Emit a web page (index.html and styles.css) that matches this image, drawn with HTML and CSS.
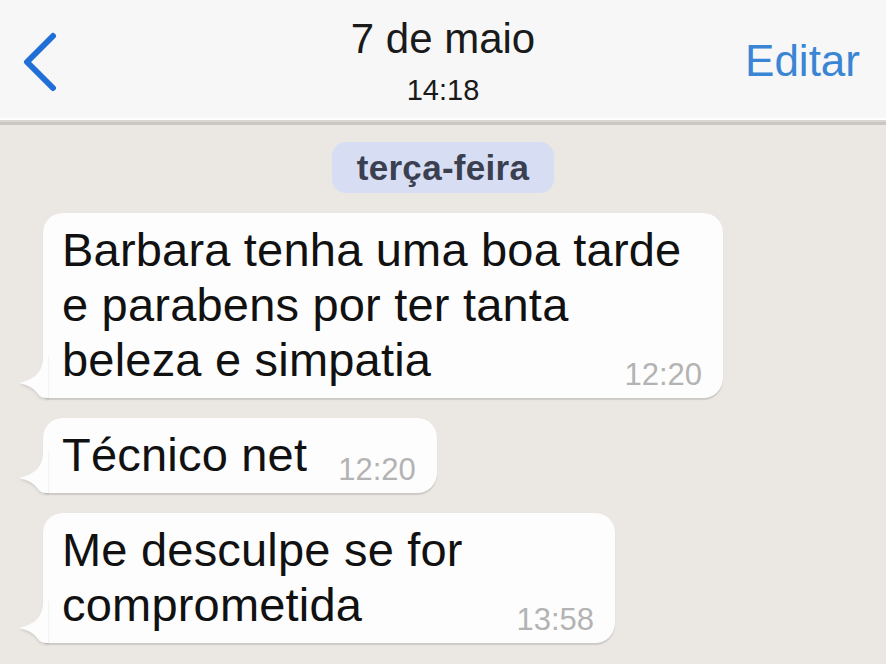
FILE: index.html
```html
<!DOCTYPE html>
<html lang="pt">
<head>
  <meta charset="UTF-8" />
  <meta name="viewport" content="width=device-width, initial-scale=1" />
  <title>7 de maio</title>
  <link rel="stylesheet" href="styles.css">
</head>
<body>
  <div class="topbar">
    <div class="back">
      <svg width="36" height="60" viewBox="0 0 36 60">
        <path d="M31 4 L5 30 L31 56" fill="none" stroke="#1f6fd6" stroke-width="6" stroke-linecap="round" stroke-linejoin="round"/>
      </svg>
    </div>
    <div class="title">
      <div class="title-date">7 de maio</div>
      <div class="title-time">14:18</div>
    </div>
    <div class="edit">Editar</div>
  </div>

  <div class="chat">
    <div class="day">terça-feira</div>

    <div class="bubble wide">
      <svg class="tail" width="30" height="44" viewBox="0 0 30 44">
        <path d="M25 0 C25 14 22 24 1 29 C10 31 16 34 20 40 C22 43 25 44 30 44 L30 0 Z" fill="#fdfdfd"/>
      </svg>
      <p class="text">Barbara tenha uma boa tarde<br>e parabens por ter tanta<br>beleza e simpatia<span class="time">12:20</span></p>
    </div>

    <div class="bubble">
      <svg class="tail" width="30" height="44" viewBox="0 0 30 44">
        <path d="M25 0 C25 14 22 24 1 29 C10 31 16 34 20 40 C22 43 25 44 30 44 L30 0 Z" fill="#fdfdfd"/>
      </svg>
      <p class="text">Técnico net<span class="time">12:20</span></p>
    </div>

    <div class="bubble mid">
      <svg class="tail" width="30" height="44" viewBox="0 0 30 44">
        <path d="M25 0 C25 14 22 24 1 29 C10 31 16 34 20 40 C22 43 25 44 30 44 L30 0 Z" fill="#fdfdfd"/>
      </svg>
      <p class="text">Me desculpe se for<br>comprometida<span class="time">13:58</span></p>
    </div>
  </div>
</body>
</html>
```

FILE: styles.css
```css
body {
  margin: 0;
  font-family: "Liberation Sans", Arial, sans-serif;
  background: #ebe8e4;
  color: #111;
  height: 664px;
  overflow: hidden;
}
.topbar {
  display: grid;
  grid-template-columns: 1fr auto 1fr;
  height: 118px;
  background: #f7f7f8;
  border-bottom: 2px solid #fff;
  box-shadow: 0 2px 0 #d8d6d3, 0 5px 0 #c9c7c4;
}
.back {
  padding: 32px 0 0 22px;
}
.back svg {
  display: block;
}
.title {
  text-align: center;
  padding-top: 15px;
  color: #1a1a1a;
}
.title-date {
  font-size: 42px;
  line-height: 48px;
}
.title-time {
  font-size: 29px;
  line-height: 34px;
  margin-top: 10px;
}
.edit {
  justify-self: end;
  padding: 36px 26px 0 0;
  font-size: 44px;
  line-height: 50px;
  color: #3a86d4;
}
.chat {
  display: flex;
  flex-direction: column;
  align-items: flex-start;
  gap: 20px;
  padding: 22px 43px 0 43px;
}
.day {
  align-self: center;
  background: #d7def4;
  color: #3b4050;
  font-size: 35px;
  font-weight: bold;
  line-height: 51px;
  padding: 0 25px;
  border-radius: 14px;
  letter-spacing: 0.3px;
}
.bubble {
  position: relative;
  background: #fdfdfd;
  border-radius: 20px 20px 20px 6px;
  box-shadow: 0 2px 1px rgba(0, 0, 0, 0.13);
  padding: 9px 21px 8px 19px;
  box-sizing: border-box;
}
.bubble.wide {
  width: 680px;
}
.bubble.mid {
  width: 572px;
}
.tail {
  position: absolute;
  left: -25px;
  bottom: 0;
  filter: drop-shadow(0 2px 1px rgba(0, 0, 0, 0.1));
}
.text {
  margin: 0;
  font-size: 47px;
  line-height: 55px;
  letter-spacing: 0.2px;
  display: flow-root;
}
.time {
  float: right;
  margin: 28px 0 0 31px;
  font-size: 31px;
  line-height: 30px;
  letter-spacing: 0;
  color: #b3b3b3;
}
```
